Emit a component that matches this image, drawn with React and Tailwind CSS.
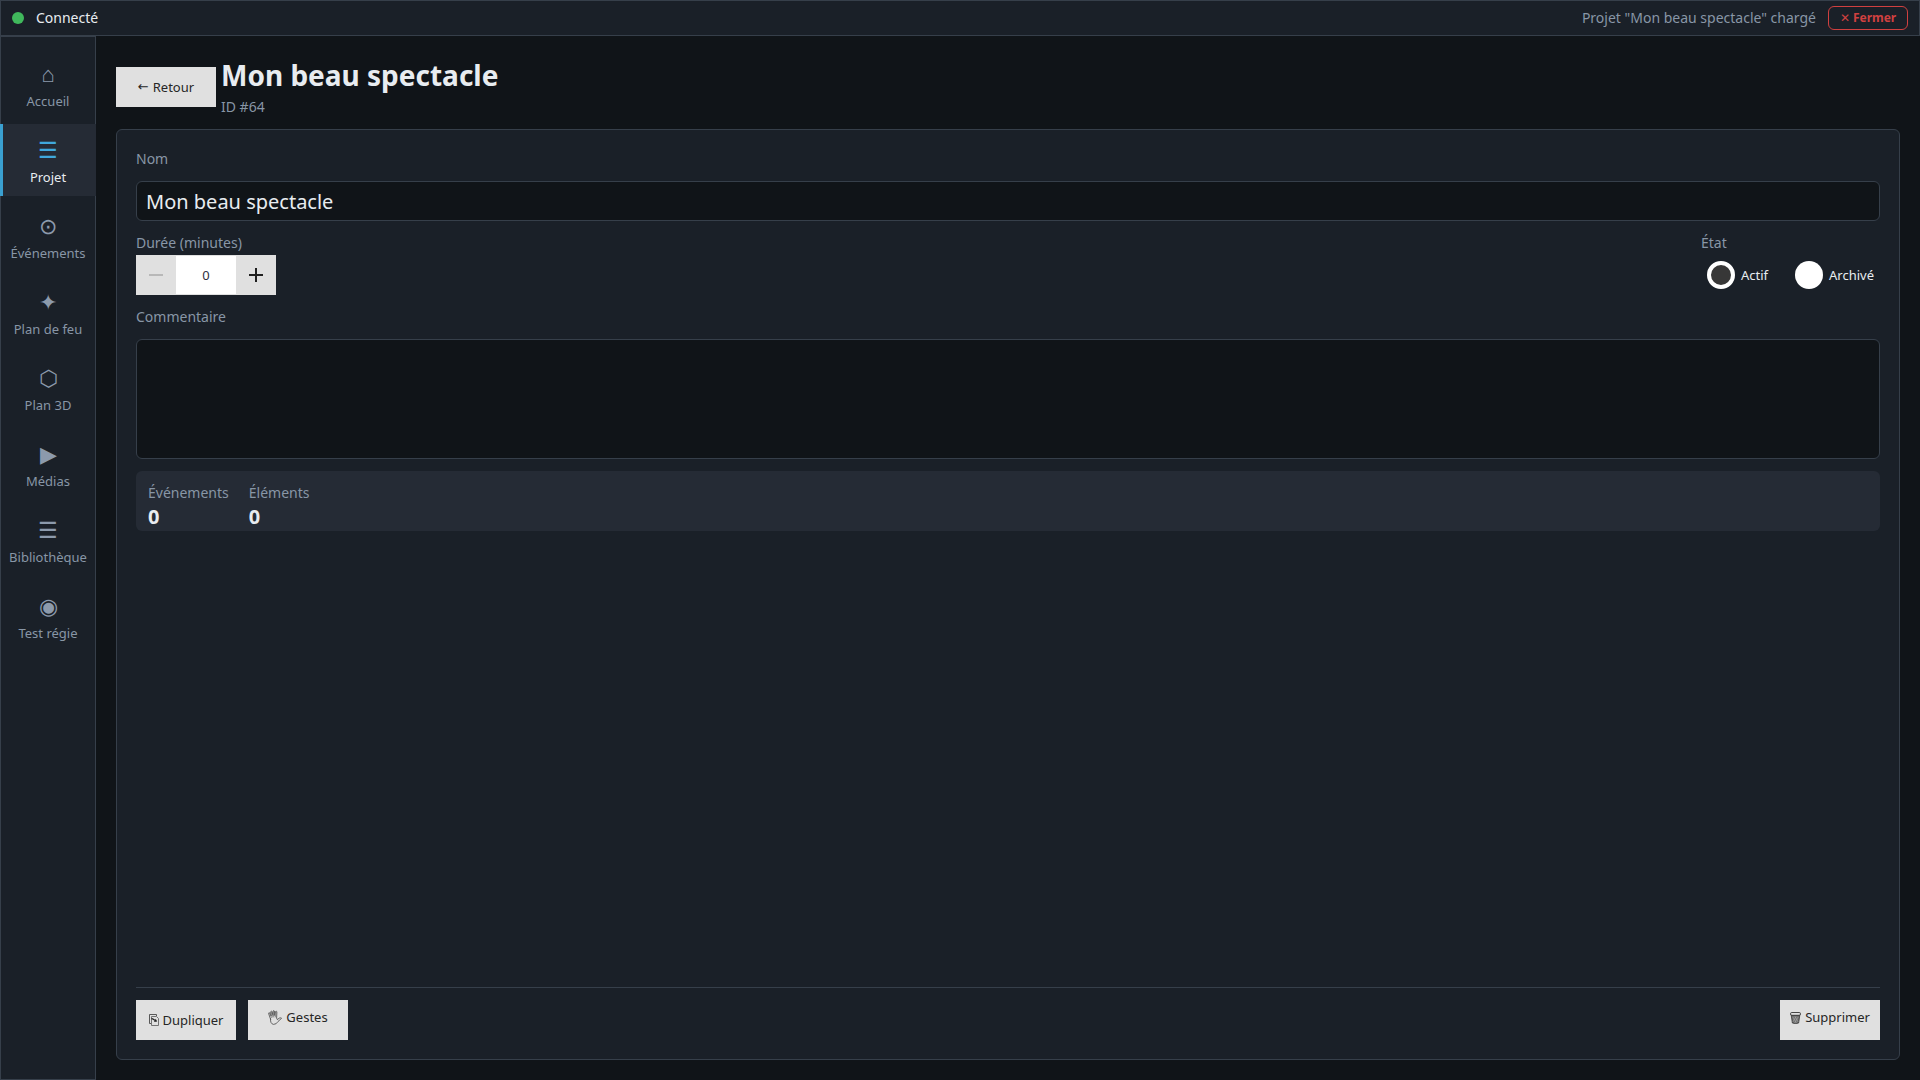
import React, { useState } from "react";

const navItems = [
  { id: "accueil", icon: "⌂", label: "Accueil" },
  { id: "projet", icon: "☰", label: "Projet" },
  { id: "evenements", icon: "⊙", label: "Événements" },
  { id: "feu", icon: "✦", label: "Plan de feu" },
  { id: "plan3d", icon: "⬡", label: "Plan 3D" },
  { id: "medias", icon: "▶", label: "Médias" },
  { id: "bibliotheque", icon: "☰", label: "Bibliothèque" },
  { id: "regie", icon: "◉", label: "Test régie" },
];

function CopyIcon() {
  return (
    <svg
      className="w-[10px] h-3"
      viewBox="0 0 10 12"
      fill="none"
      stroke="#484848"
      strokeWidth="0.9"
      aria-hidden="true"
    >
      <path d="M2 9.500H0.500v-9h7V2" />
      <path d="M2.500 2.500h5l2 2v7h-7z" stroke="#666666" />
      <path d="M2.500 4.700c2 0 2.500 1.300 4 1.800" stroke="#222222" strokeWidth="1.2" />
      <path d="M5 8l3.200-0.500-1.500-2.700z" fill="#222222" stroke="none" />
    </svg>
  );
}

function HandIcon() {
  return (
    <svg
      className="w-[14px] h-[15px]"
      viewBox="0 0 14 15"
      fill="none"
      stroke="#484848"
      strokeWidth="0.8"
      strokeLinejoin="round"
      strokeLinecap="round"
      aria-hidden="true"
    >
      <path
        d="M2.500 9L0.600 3.500q0-1 1-.7L3.200 6 2.700 1.700q.6-1 1.300 0L5 5.500V1q.7-.8 1.400 0l.3 4.500.9-4q.8-.6 1.300.2L8.600 8l.7 1.600 2-1.500q1.900-.6 2.300.2L10 11.500q-1.500 2.900-4.500 2.900Q2.200 13.800 2.500 9z"
        fill="#e0e0e0"
      />
      <path d="M1.800 3.500l1.600 4M3.500 2.500l.8 4.500M5.700 1.500V7M8.200 2.500L7.300 7" stroke="#777777" />
    </svg>
  );
}

function TrashIcon() {
  return (
    <svg className="w-[11px] h-3" viewBox="0 0 11 12" aria-hidden="true">
      <path d="M1.200 3h8.600l-1.200 8q-3.100 1-6.200 0z" fill="#707070" stroke="#333333" strokeWidth="0.8" />
      <path
        d="M2.800 5l3.700 6M5 4.500l3.200 5.500M8.200 5l-3.700 6M6 4.500l-3.200 5.500"
        stroke="#b0b0b0"
        strokeWidth="0.5"
      />
      <rect x="0.500" y="0.500" width="10" height="2.800" rx="1.300" fill="#e0e0e0" stroke="#333333" strokeWidth="0.9" />
    </svg>
  );
}

function FlatButton({ icon, raised, children }) {
  return (
    <button
      className={
        raised
          ? "flex items-center justify-center gap-1 w-[100px] h-10 pb-[5px] bg-[#e0e0e0] text-[#262626] text-[13px] whitespace-nowrap"
          : "flex items-center justify-center gap-1 w-[100px] h-10 bg-[#e0e0e0] text-[#262626] text-[13px] whitespace-nowrap"
      }
    >
      {icon}
      {children}
    </button>
  );
}

function Radio({ label, value, current, onChange }) {
  return (
    <label className="flex items-center gap-[6px] text-[13px] text-[#e8ecf0]">
      <input
        type="radio"
        name="etat"
        value={value}
        checked={current === value}
        onChange={() => onChange(value)}
        className="appearance-none w-7 h-7 rounded-full bg-white checked:bg-[#373737] checked:border-4 checked:border-white"
      />
      {label}
    </label>
  );
}

export default function App() {
  const [page, setPage] = useState("projet");
  const [name, setName] = useState("Mon beau spectacle");
  const [duration, setDuration] = useState(0);
  const [status, setStatus] = useState("actif");
  const [comment, setComment] = useState("");

  return (
    <div className="h-screen flex flex-col bg-[#101418] text-[#e8ecf0] font-['Noto_Sans',sans-serif] text-sm">
      <header className="flex items-center h-9 shrink-0 px-[11px] bg-[#1a2028] border border-[#363f4a]">
        <span className="w-3 h-3 rounded-full bg-[#40b85c]" />
        <span className="ml-3">Connecté</span>
        <span className="ml-auto mr-3 text-[#8896a6]">Projet "Mon beau spectacle" chargé</span>
        <button className="h-6 w-20 rounded-md border border-[#d04040] text-[#d04040] text-xs font-bold">
          <span className="font-normal">✕</span> Fermer
        </button>
      </header>

      <div className="flex flex-1 min-h-0">
        <nav className="flex flex-col gap-1 w-24 shrink-0 pt-[11px] bg-[#1a2028] border border-[#363f4a]">
          {navItems.map((item) => (
            <button
              key={item.id}
              onClick={() => setPage(item.id)}
              className={
                page === item.id
                  ? "flex flex-col items-center justify-center gap-[2px] -mx-px h-[72px] pt-1 bg-[#252b35] border-x-3 border-l-[#3aa0d0] border-r-transparent"
                  : "flex flex-col items-center justify-center gap-[2px] -mx-px h-[72px] pt-1"
              }
            >
              <span
                className={
                  page === item.id
                    ? "h-7 text-[22px] leading-7 text-[#40a8dc]"
                    : "h-7 text-[22px] leading-7 text-[#8c9aac]"
                }
              >
                {item.icon}
              </span>
              <span
                className={
                  page === item.id
                    ? "text-[13px] leading-6 text-[#e8ecf0]"
                    : "text-[13px] leading-6 text-[#8896a6]"
                }
              >
                {item.label}
              </span>
            </button>
          ))}
        </nav>

        <main className="flex flex-col flex-1 min-w-0 px-5 pt-[21px] pb-5">
          <div className="flex items-center gap-[5px]">
            <FlatButton>
              <span className="font-['DejaVu_Sans',sans-serif]">←</span>
              Retour
            </FlatButton>
            <div>
              <h1 className="text-[28px] leading-9 font-bold">{name}</h1>
              <p className="mt-1 leading-5 text-[#8896a6]">ID #64</p>
            </div>
          </div>

          <section className="flex flex-col flex-1 mt-3 p-[19px] bg-[#1a2028] border border-[#363f4a] rounded-md">
            <label htmlFor="nom" className="leading-5 text-[#8896a6]">
              Nom
            </label>
            <input
              id="nom"
              type="text"
              value={name}
              onChange={(e) => setName(e.target.value)}
              className="mt-3 h-10 w-full px-[9px] bg-[#101418] border border-[#363f4a] rounded-md text-xl"
            />

            <div className="flex justify-between mt-3">
              <div>
                <label htmlFor="duree" className="block leading-5 text-[#8896a6]">
                  Durée (minutes)
                </label>
                <div className="flex h-10 mt-[2px] bg-[#e0e0e0]">
                  <button
                    aria-label="Diminuer"
                    disabled={duration === 0}
                    onClick={() => setDuration(duration - 1)}
                    className="flex items-center justify-center w-10 text-[#202020] disabled:text-[#b8b8b8]"
                  >
                    <svg className="w-[14px] h-[14px]" viewBox="0 0 14 14" fill="currentColor">
                      <path d="M0 6h14v2H0z" />
                    </svg>
                  </button>
                  <input
                    id="duree"
                    type="text"
                    value={duration}
                    onChange={(e) => setDuration(Number(e.target.value) || 0)}
                    className="w-15 my-px bg-white text-center text-[13px] text-[#303040]"
                  />
                  <button
                    aria-label="Augmenter"
                    onClick={() => setDuration(duration + 1)}
                    className="flex items-center justify-center w-10 text-[#202020]"
                  >
                    <svg className="w-[14px] h-[14px]" viewBox="0 0 14 14" fill="currentColor">
                      <path d="M0 6h6V0h2v6h6v2H8v6H6V8H0z" />
                    </svg>
                  </button>
                </div>
              </div>
              <fieldset>
                <legend className="leading-5 text-[#8896a6]">État</legend>
                <div className="flex items-center gap-[27px] h-10 mt-[2px] px-[6px]">
                  <Radio label="Actif" value="actif" current={status} onChange={setStatus} />
                  <Radio label="Archivé" value="archive" current={status} onChange={setStatus} />
                </div>
              </fieldset>
            </div>

            <label htmlFor="commentaire" className="mt-3 leading-5 text-[#8896a6]">
              Commentaire
            </label>
            <textarea
              id="commentaire"
              value={comment}
              onChange={(e) => setComment(e.target.value)}
              className="mt-3 h-30 w-full p-2 bg-[#101418] border border-[#363f4a] rounded-md resize-none"
            />

            <dl className="flex gap-5 h-15 mt-3 px-3 pt-3 bg-[#252b35] rounded-md">
              <div>
                <dt className="leading-5 text-[#8896a6]">Événements</dt>
                <dd className="text-xl leading-7 font-bold">0</dd>
              </div>
              <div>
                <dt className="leading-5 text-[#8896a6]">Éléments</dt>
                <dd className="text-xl leading-7 font-bold">0</dd>
              </div>
            </dl>

            <footer className="flex gap-3 mt-auto pt-3 border-t border-[#363f4a]">
              <FlatButton icon={<CopyIcon />}>Dupliquer</FlatButton>
              <FlatButton icon={<HandIcon />} raised>
                Gestes
              </FlatButton>
              <div className="ml-auto">
                <FlatButton icon={<TrashIcon />} raised>
                  Supprimer
                </FlatButton>
              </div>
            </footer>
          </section>
        </main>
      </div>
    </div>
  );
}
